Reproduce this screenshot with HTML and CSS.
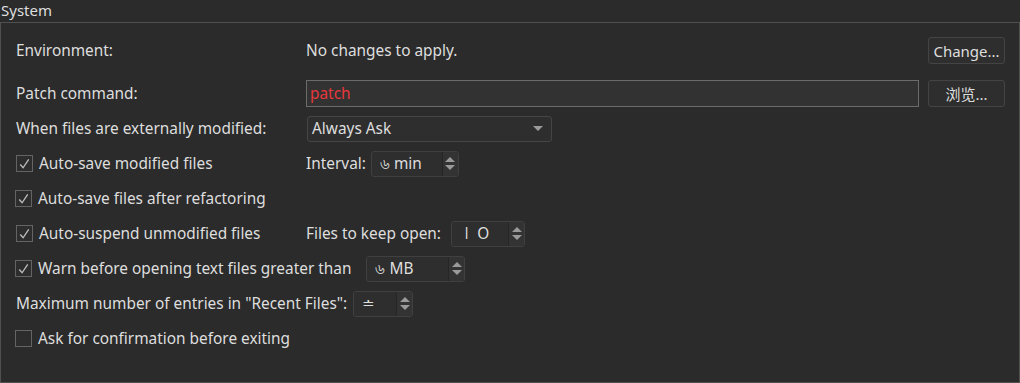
FILE: index.html
```html
<!DOCTYPE html>
<html lang="en">
<head>
    <meta charset="UTF-8">
    <title>System</title>
    <link rel="stylesheet" href="styles.css">
</head>
<body>
    <div class="title">System</div>
    <div class="group">
        <div class="row row-first">
            <span class="label">Environment:</span>
            <span class="grow">No changes to apply.</span>
            <button class="btn">Change...</button>
        </div>
        <div class="row">
            <span class="label">Patch command:</span>
            <div class="grow edit red">patch</div>
            <button class="btn">浏览...</button>
        </div>
        <div class="row">
            <span class="label">When files are externally modified:</span>
            <div class="combo">Always Ask<span class="arrow"></span></div>
        </div>
        <div class="row">
            <label class="check label"><span class="box"><svg width="16" height="16" viewBox="0 0 16 16"><path d="M3.5 8.5 L6.5 12 L12.5 3" fill="none" stroke="#bdbdbd" stroke-width="1.4"/></svg></span>Auto-save modified files</label>
            <span class="inline">Interval:</span>
            <div class="spin w-interval"><span class="val">৬ min</span><span class="btns"><i class="up"></i><i class="down"></i></span></div>
        </div>
        <div class="row">
            <label class="check"><span class="box"><svg width="16" height="16" viewBox="0 0 16 16"><path d="M3.5 8.5 L6.5 12 L12.5 3" fill="none" stroke="#bdbdbd" stroke-width="1.4"/></svg></span>Auto-save files after refactoring</label>
        </div>
        <div class="row">
            <label class="check label"><span class="box"><svg width="16" height="16" viewBox="0 0 16 16"><path d="M3.5 8.5 L6.5 12 L12.5 3" fill="none" stroke="#bdbdbd" stroke-width="1.4"/></svg></span>Auto-suspend unmodified files</label>
            <span class="inline wide">Files to keep open:</span>
            <div class="spin w-open"><span class="val ten">ǀ O</span><span class="btns"><i class="up"></i><i class="down"></i></span></div>
        </div>
        <div class="row">
            <label class="check"><span class="box"><svg width="16" height="16" viewBox="0 0 16 16"><path d="M3.5 8.5 L6.5 12 L12.5 3" fill="none" stroke="#bdbdbd" stroke-width="1.4"/></svg></span>Warn before opening text files greater than</label>
            <div class="spin w-mb"><span class="val">৬ MB</span><span class="btns"><i class="up"></i><i class="down"></i></span></div>
        </div>
        <div class="row">
            <span>Maximum number of entries in "Recent Files":</span>
            <div class="spin w-recent"><span class="val">≐</span><span class="btns"><i class="up"></i><i class="down"></i></span></div>
        </div>
        <div class="row">
            <label class="check"><span class="box"></span>Ask for confirmation before exiting</label>
        </div>
    </div>
</body>
</html>
```

FILE: styles.css
```css
*{
    margin: 0;
    padding: 0;
    box-sizing: border-box;
}
body{
    width: 1020px;
    height: 383px;
    background-color: #2b2b2b;
    color: #dedede;
    font-family: "Noto Sans", "Noto Sans CJK SC", sans-serif;
    font-size: 15.4px;
    overflow: hidden;
}
.title{
    height: 22px;
    line-height: 20px;
    padding-left: 1px;
    font-size: 15px;
}
.group{
    height: 361px;
    border: 1px solid #505050;
    padding: 14px 14px 0 14px;
    display: flex;
    flex-direction: column;
    gap: 9px;
}
.row{
    height: 26px;
    display: flex;
    align-items: center;
    padding-top: 1px;
}
.row-first{
    margin-bottom: 8px;
}
.label{
    width: 291px;
    flex-shrink: 0;
    padding-left: 1px;
}
.row > span:first-child{
    padding-left: 1px;
}
.grow{
    flex: 1;
}
.edit{
    height: 27px;
    border: 1px solid #6b6b6b;
    background-color: #323232;
    line-height: 25px;
    padding-left: 3px;
    font-size: 15.4px;
}
.red{
    color: #e8383d;
}
.btn{
    width: 77px;
    height: 27px;
    margin-left: 9px;
    background-color: #2e2e2e;
    border: 1px solid #444;
    border-radius: 3px;
    color: #dedede;
    font-family: inherit;
    font-size: 15px;
}
.combo{
    width: 245px;
    height: 26px;
    margin-left: 1px;
    background-color: #2e2e2e;
    border: 1px solid #454545;
    border-radius: 3px;
    padding-left: 4px;
    display: flex;
    align-items: center;
    justify-content: space-between;
}
.arrow{
    width: 0;
    height: 0;
    margin-right: 8px;
    border-left: 5px solid transparent;
    border-right: 5px solid transparent;
    border-top: 5px solid #9a9a9a;
}
.check{
    display: flex;
    align-items: center;
}
.box{
    width: 17px;
    height: 17px;
    border: 1px solid #646464;
    background-color: #2d2d2d;
    margin-right: 6px;
    display: flex;
    align-items: center;
    justify-content: center;
}
.box svg{
    display: block;
}
.inline{
    margin-right: 5px;
}
.inline.wide{
    margin-right: 10px;
}
.spin{
    height: 26px;
    border: 1px solid #404040;
    border-radius: 3px;
    background-color: #2e2e2e;
    display: flex;
}
.spin .val{
    flex: 1;
    line-height: 24px;
    padding-left: 8px;
}
.spin .ten{
    letter-spacing: 2px;
    padding-left: 12px;
}
.spin .btns{
    width: 16px;
    border-left: 1px solid #262626;
    background-color: #333;
    display: flex;
    flex-direction: column;
    align-items: center;
    justify-content: center;
    gap: 3px;
}
.spin i{
    display: block;
    width: 0;
    height: 0;
    border-left: 5px solid transparent;
    border-right: 5px solid transparent;
}
.spin i.up{
    border-bottom: 5px solid #9a9a9a;
}
.spin i.down{
    border-top: 5px solid #9a9a9a;
}
.w-interval{
    width: 88px;
}
.w-open{
    width: 74px;
}
.w-mb{
    width: 99px;
    margin-left: 15px;
}
.w-recent{
    width: 60px;
    margin-left: 6px;
}
```
